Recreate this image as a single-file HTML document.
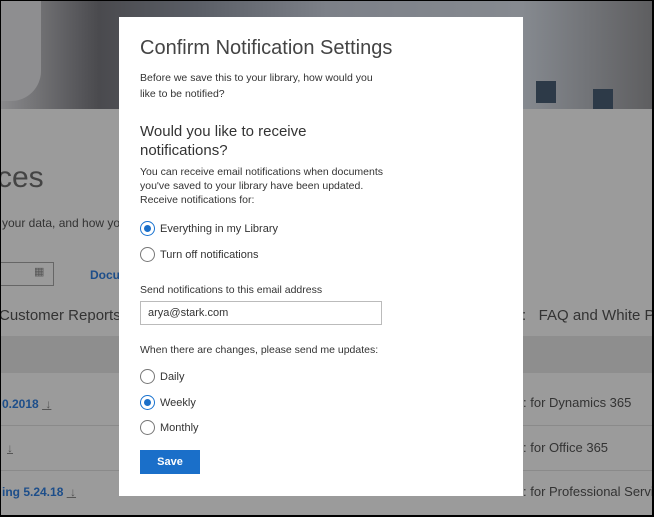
<html><head><style>
body{margin:0;width:654px;height:517px;overflow:hidden;font-family:"Liberation Sans",sans-serif;position:relative;background:#000}
#bg{position:absolute;left:1px;top:1px;width:651px;height:514px;background:#9b9b9b;overflow:hidden}
.t{position:absolute;white-space:nowrap}
#m{position:absolute;left:119px;top:17px;width:404px;height:479px;background:#fff;color:#333}
.r{position:absolute;left:21px;width:13px;height:13px;border:1px solid #777;border-radius:50%;background:#fff}
.r.on{border-color:#1a73d0}
.r.on:after{content:"";position:absolute;left:3px;top:3px;width:7px;height:7px;border-radius:50%;background:#1a6fc9}
.l{position:absolute;left:41px;font-size:11px;color:#333}
.dl{font-weight:normal;color:#555;text-decoration:underline}
</style></head><body><div id="bg">
<div style="position:absolute;left:0;top:0;width:651px;height:108px;background:linear-gradient(90deg,#8a8a8c 0%,#4a4a4e 15%,#5a5e66 30%,#7c8088 50%,#868a90 80%,#5e5e60 100%)"></div>
<div style="position:absolute;left:0;top:0;width:40px;height:100px;background:#8e8e90;border-radius:0 0 30px 0"></div>
<div style="position:absolute;left:535px;top:80px;width:20px;height:22px;background:#2d3a48"></div>
<div style="position:absolute;left:592px;top:88px;width:20px;height:20px;background:#2d3a48"></div>
<div class="t" style="left:-4px;top:160px;font-size:30px;color:#444">ces</div>
<div class="t" style="left:1px;top:215px;font-size:12px;color:#333">your data, and how you</div>
<div style="position:absolute;left:-2px;top:261px;width:53px;height:22px;border:1px solid #666"></div>
<div class="t" style="left:33px;top:264px;font-size:11px;color:#555">▦</div>
<div class="t" style="left:89px;top:267px;font-size:12px;font-weight:bold;color:#1d4e8a">Docu</div>
<div class="t" style="left:-2px;top:306px;font-size:15px;color:#333">Customer Reports</div>
<div class="t" style="left:521px;top:306px;font-size:15px;color:#333">: &nbsp; FAQ and White P</div>
<div style="position:absolute;left:0;top:335px;width:651px;height:37px;background:#8e8e8e"></div>
<div style="position:absolute;left:0;top:424px;width:651px;height:1px;background:#8a8a8a"></div>
<div style="position:absolute;left:0;top:469px;width:651px;height:1px;background:#8a8a8a"></div>
<div class="t" style="left:1px;top:396px;font-size:12px;font-weight:bold;color:#1d4e8a">0.2018 <span class="dl">&nbsp;↓</span></div>
<div class="t" style="left:6px;top:440px;font-size:12px;color:#555;text-decoration:underline">↓</div>
<div class="t" style="left:1px;top:484px;font-size:12px;font-weight:bold;color:#1d4e8a">ing 5.24.18 <span class="dl">&nbsp;↓</span></div>
<div class="t" style="left:522px;top:394px;font-size:13px;color:#333">: for Dynamics 365</div>
<div class="t" style="left:522px;top:439px;font-size:13px;color:#333">: for Office 365</div>
<div class="t" style="left:522px;top:483px;font-size:13px;color:#333">: for Professional Service</div>
</div>
<div id="m">
<div class="t" style="left:21px;top:20px;font-size:20px;color:#444">Confirm Notification Settings</div>
<div class="t" style="left:21px;top:53px;font-size:10.5px;line-height:16px;color:#333">Before we save this to your library, how would you<br>like to be notified?</div>
<div class="t" style="left:21px;top:105px;font-size:15px;line-height:19px;color:#333">Would you like to receive<br>notifications?</div>
<div class="t" style="left:21px;top:148px;font-size:10.5px;line-height:14px;color:#333">You can receive email notifications when documents<br>you've saved to your library have been updated.</div>
<div class="t" style="left:21px;top:177px;font-size:10.5px;color:#333">Receive notifications for:</div>
<div class="r on" style="top:204px"></div><div class="l" style="top:206px">Everything in my Library</div>
<div class="r" style="top:230px"></div><div class="l" style="top:232px">Turn off notifications</div>
<div class="t" style="left:21px;top:267px;font-size:10.5px;color:#333">Send notifications to this email address</div>
<div style="position:absolute;left:21px;top:284px;width:240px;height:22px;border:1px solid #bbb"></div>
<div class="t" style="left:29px;top:290px;font-size:11px;color:#333">arya@stark.com</div>
<div class="t" style="left:21px;top:327px;font-size:10.5px;color:#333">When there are changes, please send me updates:</div>
<div class="r" style="top:352px"></div><div class="l" style="top:354px">Daily</div>
<div class="r on" style="top:378px"></div><div class="l" style="top:380px">Weekly</div>
<div class="r" style="top:403px"></div><div class="l" style="top:405px">Monthly</div>
<div style="position:absolute;left:21px;top:433px;width:60px;height:24px;background:#1a6fc9;color:#fff;font-size:11px;font-weight:bold;text-align:center;line-height:24px">Save</div>
</div>
</body></html>
